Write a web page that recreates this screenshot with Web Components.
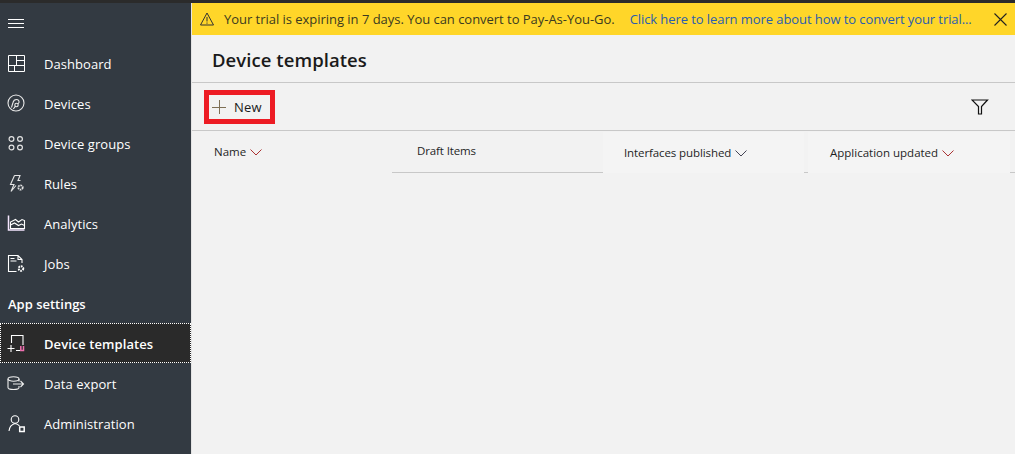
<!DOCTYPE html>
<html lang="en"><head><meta charset="utf-8"><title>Device templates</title>
<style>
html,body{margin:0;padding:0;height:100%;overflow:hidden;background:#f2f2f2;font-family:"Open Sans","Noto Sans",sans-serif;}
</style></head><body>
<app-shell>
  <side-nav slot="nav">
    <nav-item label="Dashboard"><svg viewBox="0 0 20 20" width="20" height="20" fill="none" stroke="#fff" stroke-width="1"><path d="M1.500 1.500h16v16h-16zM1.500 11.500h16M9.500 1.500v10M9.500 6.500h8M7.500 11.500v6"/></svg></nav-item>
    <nav-item label="Devices"><svg viewBox="0 0 20 20" width="20" height="20" fill="none" stroke="#e8e8e8" stroke-width="1.100"><circle cx="9" cy="9" r="8"/><circle cx="9.500" cy="11" r="1.700"/><path d="M4.500 13.500 6 8.500c.5-2 2-3 3.500-3 1.800 0 2.800 1.200 2.500 3l-1.200 1.500M8.300 12.300l-2 2.700"/></svg></nav-item>
    <nav-item label="Device groups"><svg viewBox="0 0 20 20" width="20" height="20" fill="none" stroke="#e4e4e4" stroke-width="1.200"><circle cx="4.500" cy="5" r="2.400"/><circle cx="13" cy="5" r="2.400"/><circle cx="4.500" cy="13.500" r="2.400"/><circle cx="13" cy="13.500" r="2.400"/></svg></nav-item>
    <nav-item label="Rules"><svg viewBox="0 0 20 20" width="20" height="20" fill="none" stroke="#e4e4e4" stroke-width="1.100"><path d="M7.500 1.500h5.500l-2 5h2.500M7.500 1.500l-4 9h3.500l-3 7 5-6"/><circle cx="13.500" cy="13.500" r="2.200" stroke-width="1.800" stroke-dasharray="1.600 .7"/></svg></nav-item>
    <nav-item label="Analytics"><svg viewBox="0 0 20 20" width="20" height="20" fill="none" stroke="#fff" stroke-width="1.100"><path d="M1.500 1.500v14.500h16" stroke="#f5e6ff" stroke-width="1.500"/><path d="M3.500 14.500h14V6.500l-2.500-1-3.500 2.500-3-2.500-5 2.500zM3.500 11l4-2 4 2.500 3-1.500 3 1.500"/></svg></nav-item>
    <nav-item label="Jobs"><svg viewBox="0 0 20 20" width="20" height="20" fill="none" stroke="#fff" stroke-width="1.100"><path d="M9.500 17.500H1.500V1.500h9.500l4 4v3.500M11 1.500v4h4M3.500 4.500h4M3.500 7h6"/><circle cx="14" cy="14.500" r="2.300" stroke-width="1.900" stroke-dasharray="1.600 .8"/></svg></nav-item>
    <nav-section>App settings</nav-section>
    <nav-item label="Device templates" selected><svg viewBox="0 0 20 20" width="20" height="20" fill="none" stroke="#fff" stroke-width="1.100"><path d="M4.500 9V1.500h11.500v9.500"/><path d="M.5 14.500h7M4 11v7M9 16.500h4"/><path d="M13.800 12v4.500h2.700V12" stroke="#f070b0" stroke-width="1.500"/></svg></nav-item>
    <nav-item label="Data export"><svg viewBox="0 0 20 20" width="20" height="20" fill="none" stroke="#eee" stroke-width="1.100"><ellipse cx="6.500" cy="5" rx="5.500" ry="2.200"/><path d="M1 5v8.500c0 1.300 2.500 2 5.500 2s5.500-.7 5.500-2V12M12 5v2.500M6 10h10.500M13.500 7l3 3-3 3"/></svg></nav-item>
    <nav-item label="Administration"><svg viewBox="0 0 20 20" width="20" height="20" fill="none" stroke="#fff" stroke-width="1.100"><circle cx="8" cy="5.500" r="3.800"/><path d="M2 17c.3-3.500 2.500-6.500 6-7.500 1.800.3 3.500 1.200 4.500 2.500"/><rect x="12.700" y="13" width="4.500" height="4.500" stroke-width="1.500"/></svg></nav-item>
  </side-nav>
  <trial-banner></trial-banner>
  <page-header>Device templates</page-header>
  <page-toolbar></page-toolbar>
  <header-row>
    <col-head style="width:200px;padding-left:22px;box-sizing:border-box" sort>Name</col-head>
    <col-head variant="draft" style="letter-spacing:-.12px">Draft Items</col-head>
    <col-head variant="light" sort style="width:201px;padding-left:21px;box-sizing:border-box;letter-spacing:-.1px">Interfaces published</col-head>
    <col-head variant="gap" style="width:4px"></col-head>
    <col-head variant="light" sort accent style="width:202px;padding-left:22px;box-sizing:border-box">Application updated</col-head>
    <col-head variant="gap" style="flex:1"></col-head>
  </header-row>
</app-shell>
<script>
function def(name,html,init){
  customElements.define(name,class extends HTMLElement{
    constructor(){super();this.attachShadow({mode:'open'}).innerHTML=html;}
    connectedCallback(){if(init)init(this);}
  });
}
def('app-shell',`<style>
:host{display:block;height:454px;width:1015px;box-sizing:border-box;border-top:3px solid #2b2b2b;background:#f2f2f2;overflow:hidden}
.w{display:grid;grid-template-columns:191px 1fr;height:451px}
.m{min-width:0;border-left:1px solid #e4e4e4}
</style><div class="w"><slot name="nav"></slot><div class="m"><slot></slot></div></div>`);
def('side-nav',`<style>
:host{display:block;background:#333a42;color:#fff;padding-top:1px;height:450px;overflow:hidden}
.h{height:40px;display:flex;align-items:center;padding-left:8px}
</style><div class="h"><svg width="17" height="12" viewBox="0 0 17 12" stroke="#fff" stroke-width="1"><path d="M0 1.500h16M0 5.500h16M0 9.500h16"/></svg></div><slot></slot>`);
def('nav-item',`<style>
:host{display:flex;align-items:center;height:40px;box-sizing:border-box;font-size:13px;color:#fff;letter-spacing:.06px}
:host([selected]){background:#2a2a2a;font-weight:600;outline:1px dotted #fff;outline-offset:-1px;margin-top:-1px;margin-bottom:1px;padding-top:2px}
.i{width:20px;height:20px;margin-left:7px;margin-right:17px;display:flex}
</style><span class="i"><slot></slot></span><span class="t"></span>`,el=>{el.shadowRoot.querySelector('.t').textContent=el.getAttribute('label');});
def('nav-section',`<style>
:host{display:flex;align-items:center;height:40px;padding-left:8px;font-size:13px;font-weight:600;color:#fff}
</style><slot></slot>`);
def('trial-banner',`<style>
:host{display:flex;align-items:center;height:32px;background:#ffd629;font-size:13px;color:#3b3a20;white-space:nowrap;position:relative}
.w{margin-left:8px;margin-right:10px;display:flex}
a{color:#2a5db0;margin-left:15px;text-decoration:none;letter-spacing:-.08px}
.x{margin-left:auto;margin-right:8px;display:flex}
.tx{letter-spacing:-.03px}
</style>
<span class="w"><svg width="14" height="14" viewBox="0 0 14 14" fill="none" stroke="#333" stroke-width="1"><path d="M7 1 13.500 13H.5z"/><path d="M7 5v4.500M7 10.500v1.200"/></svg></span>
<span class="tx">Your trial is expiring in 7 days. You can convert to Pay-As-You-Go.</span>
<a>Click here to learn more about how to convert your trial...</a>
<span class="x"><svg width="13" height="13" viewBox="0 0 13 13" stroke="#222" stroke-width="1.100"><path d="M.5.500l12 12M12.500.500l-12 12"/></svg></span>`);
def('page-header',`<style>
:host{display:flex;align-items:center;height:48px;box-sizing:border-box;border-bottom:1px solid #c8c8c8;padding:2px 0 0 20px;font-size:18.500px;font-weight:600;color:#1a1a1a;letter-spacing:.06px}
</style><slot></slot>`);
def('page-toolbar',`<style>
:host{display:flex;align-items:center;justify-content:space-between;height:48px;box-sizing:border-box;border-bottom:1px solid #c8c8c8;padding:0 26px 0 12px}
.b{display:flex;align-items:center;box-sizing:border-box;width:71px;height:34px;border:5px solid #ed1c24;font-size:13px;color:#1a1a1a;padding-left:3px;gap:8px;letter-spacing:.2px}
.f{display:flex}
</style><span class="b"><svg width="14" height="14" viewBox="0 0 14 14" stroke="#7d6f55" stroke-width="1"><path d="M0 7.500h14M7.500 0v14"/></svg>New</span>
<span class="f"><svg width="18" height="16" viewBox="0 0 18 16" fill="none" stroke="#111" stroke-width="1.200"><path d="M1 1h15.500l-6 6.500V15h-3V7.500z"/></svg></span>`);
def('header-row',`<style>
:host{display:flex;height:42px;align-items:stretch}
</style><slot></slot>`);
def('col-head',`<style>
:host{display:flex;align-items:center;font-size:11.5px;color:#1f1f1f;height:41px;box-sizing:border-box}
:host([variant=draft]){width:211px;padding-left:25px;box-sizing:border-box;border-bottom:1px solid #c8c8c8;height:42px;padding-bottom:2px}
:host([variant=light]){background:#f4f4f4;margin-top:1px}
:host([variant=gap]){height:42px;border-bottom:1px solid #c8c8c8}
svg{margin-left:4px;margin-top:1px}
</style><slot></slot>`,el=>{
  if(el.hasAttribute('sort')&&!el.shadowRoot.querySelector('svg')){
    const c=el.hasAttribute('accent')||el.textContent==='Name'?'#a33':'#445';
    el.shadowRoot.innerHTML+=`<svg width="12" height="7" viewBox="0 0 12 7" fill="none" stroke="${c}" stroke-width="1"><path d="M.5.500 6 6 11.500.500"/></svg>`;
  }
});
</script>
</body></html>
